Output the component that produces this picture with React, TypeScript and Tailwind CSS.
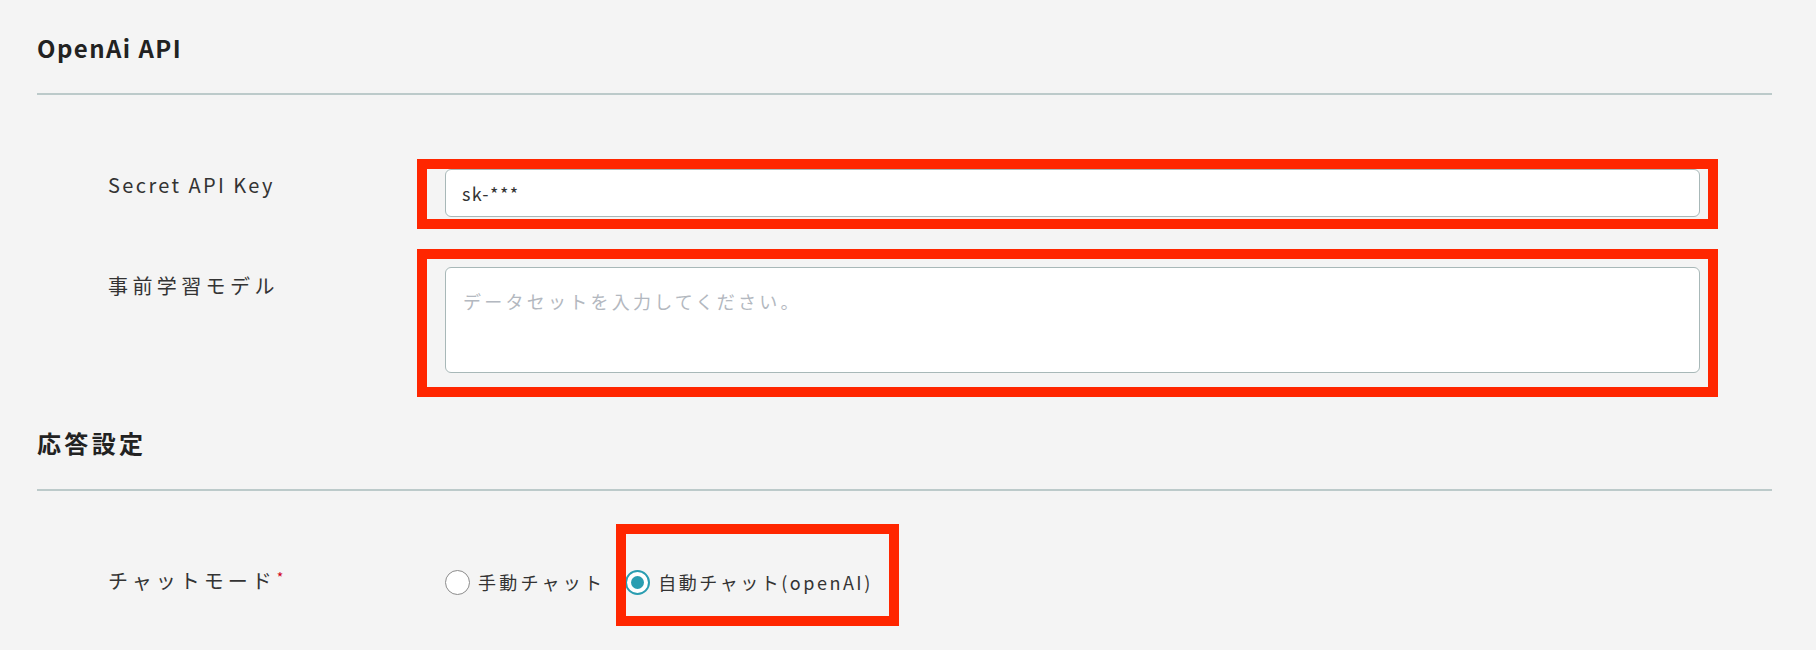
import { useState } from "react";

// red annotation frame drawn over a field
function Mark({ className }: { className: string }) {
  return (
    <div
      className={`pointer-events-none absolute border-[10px] border-[#ff2600] ${className}`}
    />
  );
}

function Radio({ checked }: { checked: boolean }) {
  return checked ? (
    <span className="flex h-[25px] w-[25px] shrink-0 items-center justify-center rounded-full border-2 border-[#2a9db1] bg-white">
      <span className="h-[13px] w-[13px] rounded-full bg-[#2a9db1]" />
    </span>
  ) : (
    <span className="h-[25px] w-[25px] shrink-0 rounded-full border-[1.5px] border-[#8c8c8c] bg-white" />
  );
}

export default function App() {
  const [apiKey, setApiKey] = useState("sk-***");
  const [dataset, setDataset] = useState("");
  const [mode, setMode] = useState<"manual" | "auto">("auto");

  return (
    <div className="min-h-[650px] w-full bg-[#f4f4f4] pl-[37px] pr-[44px] font-['Noto_Sans_CJK_JP','Noto_Sans',sans-serif] text-[#333]">
      {/* OpenAI API */}
      <h2 className="pt-[30px] text-[24px] font-bold leading-[36px] tracking-[0.06em] text-[#222]">
        OpenAi API
      </h2>
      <div className="mt-[27px] h-[2px] bg-[#bccaca]" />

      <div className="mt-[74px] flex">
        <label className="w-[408px] shrink-0 pl-[71px] pt-[2px] text-[20px] leading-[28px] tracking-[0.12em]">
          Secret API Key
        </label>
        <div className="relative mr-[72px] flex-1">
          <input
            type="text"
            value={apiKey}
            onChange={(e) => setApiKey(e.target.value)}
            className="h-[48px] w-full rounded-[6px] border border-[#a8b8b8] bg-white px-[16px] text-[18px] tracking-[0.08em] text-[#333] outline-none"
          />
          <Mark className="-top-[10px] -bottom-[12px] -left-[28px] -right-[18px]" />
        </div>
      </div>

      <div className="mt-[50px] flex">
        <label className="w-[408px] shrink-0 pl-[71px] pt-[5px] text-[20px] leading-[28px] tracking-[0.22em]">
          事前学習モデル
        </label>
        <div className="relative mr-[72px] flex-1">
          <textarea
            value={dataset}
            onChange={(e) => setDataset(e.target.value)}
            placeholder="データセットを入力してください。"
            className="block h-[106px] w-full resize-none rounded-[6px] border border-[#a8b8b8] bg-white px-[17px] pt-[19px] text-[18px] leading-[28px] tracking-[0.18em] text-[#333] outline-none placeholder:text-[#b3b8c0]"
          />
          <Mark className="-top-[18px] -bottom-[24px] -left-[28px] -right-[18px]" />
        </div>
      </div>

      {/* 応答設定 */}
      <h2 className="mt-[52px] text-[24px] font-bold leading-[36px] tracking-[0.14em] text-[#222]">
        応答設定
      </h2>
      <div className="mt-[28px] h-[2px] bg-[#bccaca]" />

      <div className="mt-[76px] flex items-center">
        <label className="w-[408px] shrink-0 pl-[71px] text-[20px] leading-[28px] tracking-[0.2em]">
          チャットモード
          <span className="relative -top-[6px] ml-[1px] text-[14px] text-[#d0021b]">*</span>
        </label>
        <div className="flex items-center">
          <button
            onClick={() => setMode("manual")}
            className="flex items-center gap-[8px] text-[18px] leading-[28px] tracking-[0.18em]"
          >
            <Radio checked={mode === "manual"} />
            手動チャット
          </button>
          <button
            onClick={() => setMode("auto")}
            className="relative ml-[20px] flex items-center gap-[8px] text-[18px] leading-[28px] tracking-[0.14em]"
          >
            <Radio checked={mode === "auto"} />
            自動チャット(openAI)
            <Mark className="-top-[44px] -bottom-[30px] -left-[9px] -right-[26px]" />
          </button>
        </div>
      </div>
    </div>
  );
}
